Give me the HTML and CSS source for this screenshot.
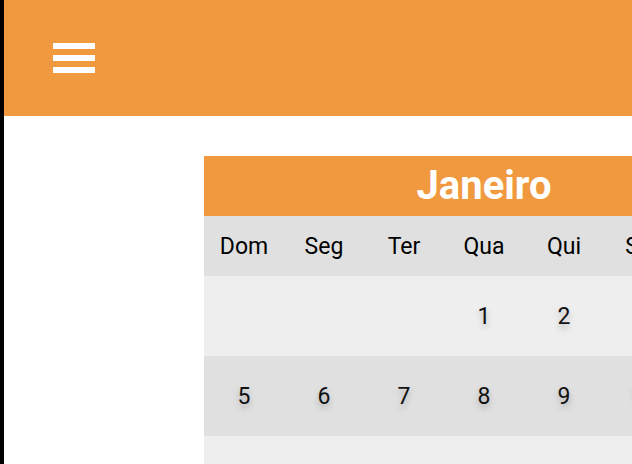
FILE: index.html
```html
<!DOCTYPE html>
<html lang="pt">
<head>
<meta charset="utf-8">
<title>Calendário</title>
<link rel="stylesheet" href="styles.css">
</head>
<body>
<div class="app">
  <header class="topbar">
    <button class="menu-btn" aria-label="Menu">
      <span class="bar"></span><span class="bar"></span><span class="bar"></span>
    </button>
  </header>
  <main class="content">
    <section class="calendar">
      <h1 class="month">Janeiro</h1>
      <div class="week weekdays">
        <div class="cell">Dom</div><div class="cell">Seg</div><div class="cell">Ter</div><div class="cell">Qua</div><div class="cell">Qui</div><div class="cell">Sex</div><div class="cell">Sáb</div>
      </div>
      <div class="week light">
        <div class="cell day"></div><div class="cell day"></div><div class="cell day"></div><div class="cell day">1</div><div class="cell day">2</div><div class="cell day">3</div><div class="cell day">4</div>
      </div>
      <div class="week dark">
        <div class="cell day">5</div><div class="cell day">6</div><div class="cell day">7</div><div class="cell day">8</div><div class="cell day">9</div><div class="cell day">10</div><div class="cell day">11</div>
      </div>
      <div class="week light">
        <div class="cell day">12</div><div class="cell day">13</div><div class="cell day">14</div><div class="cell day">15</div><div class="cell day">16</div><div class="cell day">17</div><div class="cell day">18</div>
      </div>
    </section>
  </main>
</div>
</body>
</html>
```

FILE: styles.css
```css
html, body {
  margin: 0;
  padding: 0;
  height: 100%;
}
body {
  overflow: hidden;
  background: #000;
  font-family: Roboto, "Noto Sans", sans-serif;
}
.app {
  margin-left: 4px;
  min-height: 100%;
  background: #fff;
}
.topbar {
  height: 116px;
  background: #f0993f;
  display: flex;
  align-items: center;
  padding-left: 49px;
}
.menu-btn {
  display: flex;
  flex-direction: column;
  gap: 6px;
  padding: 0;
  margin: 0;
  border: 0;
  background: none;
  cursor: pointer;
}
.menu-btn .bar {
  display: block;
  width: 42px;
  height: 6px;
  background: #fff;
}
.content {
  padding: 40px 0 0 200px;
}
.calendar {
  width: 560px;
}
.month {
  margin: 0;
  height: 60px;
  background: #f0993f;
  color: #fff;
  font-weight: 700;
  font-size: 40px;
  line-height: 60px;
  text-align: center;
}
.week {
  display: grid;
  grid-template-columns: repeat(7, 80px);
}
.weekdays {
  height: 60px;
  background: #e0e0e0;
  font-size: 23px;
}
.weekdays .cell {
  display: flex;
  align-items: center;
  justify-content: center;
  color: #000;
}
.light { background: #eeeeee; }
.dark { background: #e0e0e0; }
.day {
  height: 80px;
  display: flex;
  align-items: center;
  justify-content: center;
  font-size: 23px;
  color: #111;
  text-shadow: 0 4px 6px rgba(0, 0, 0, 0.25);
}
```
